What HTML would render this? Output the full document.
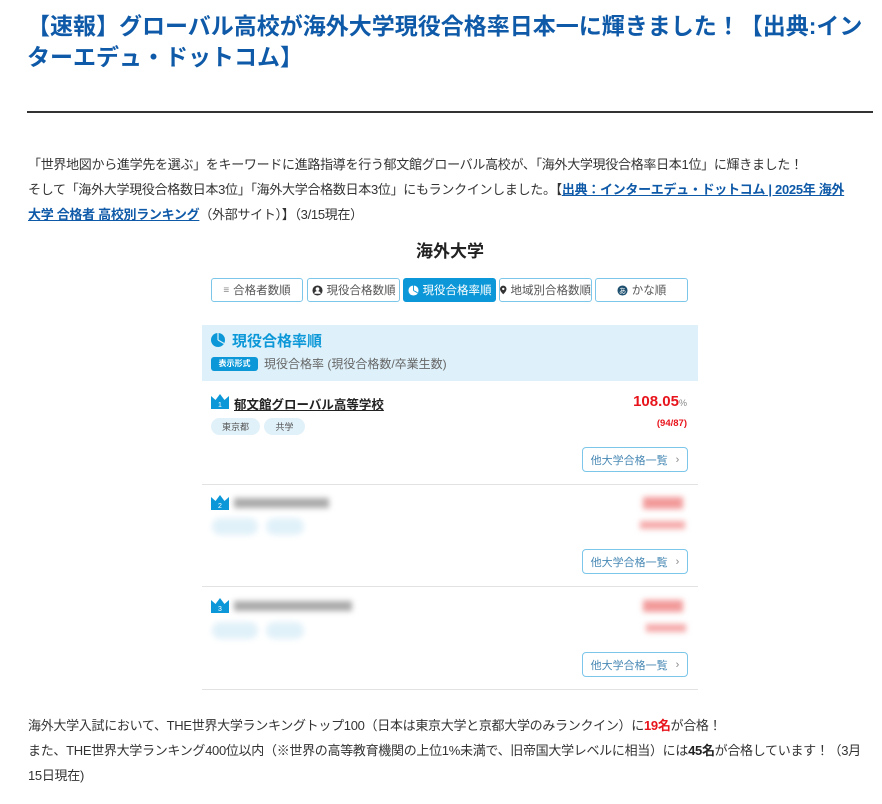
<!DOCTYPE html>
<html><head><meta charset="utf-8"><style>
*{margin:0;padding:0;box-sizing:border-box}
body{width:882px;height:804px;background:#fff;font-family:"Liberation Sans","Noto Sans CJK JP",sans-serif;color:#333;position:relative;overflow:hidden}
.abs{position:absolute}
h1{position:absolute;left:27px;top:11px;width:850px;font-size:23px;line-height:31px;color:#0f5aa8;font-weight:bold}
.hr{left:27px;top:111px;width:846px;height:2px;background:#333}
.p{left:28px;font-size:13px;line-height:25px;color:#333;white-space:nowrap;letter-spacing:-0.3px}
.p a{color:#0f5aa8;font-weight:bold;text-decoration:underline}
.tab{position:absolute;top:278px;height:24px;border:1.5px solid #7cc6ea;border-radius:3px;font-size:11.5px;color:#555;display:flex;align-items:center;justify-content:center;gap:4px;background:#fff;white-space:nowrap}
.tab.on{background:#0c98d8;border-color:#0c98d8;color:#fff}
.btn{position:absolute;left:582px;width:106px;height:25px;border:1.5px solid #7cc6ea;border-radius:4px;font-size:11px;color:#4a8ab5;display:flex;align-items:center;justify-content:center;gap:8px}
.tag{position:absolute;height:17px;border-radius:9px;background:#e1f1f9;font-size:9px;color:#555;display:flex;align-items:center;justify-content:center}
.crown{position:absolute;width:18px;height:15px}
.blur{filter:blur(3px)}
.div{position:absolute;left:202px;width:496px;height:1px;background:#e2e2e2}
</style></head><body>
<h1>【速報】グローバル高校が海外大学現役合格率日本一に輝きました！【出典:インターエデュ・ドットコム】</h1>
<div class="abs hr"></div>
<div class="abs p" style="top:152px">「世界地図から進学先を選ぶ」をキーワードに進路指導を行う郁文館グローバル高校が、「海外大学現役合格率日本1位」に輝きました！</div>
<div class="abs p" style="top:177px">そして「海外大学現役合格数日本3位」「海外大学合格数日本3位」にもランクインしました。【<a>出典：インターエデュ・ドットコム | 2025年 海外</a></div>
<div class="abs p" style="top:202px"><a>大学 合格者 高校別ランキング</a>（外部サイト）】（3/15現在）</div>

<div class="abs" style="left:202px;top:237px;width:496px;text-align:center;font-size:17px;font-weight:bold;color:#222">海外大学</div>
<div class="tab" style="left:211px;width:92px"><span style="font-size:10px;color:#888">≡</span>合格者数順</div>
<div class="tab" style="left:307px;width:93px"><svg width="11" height="11" viewBox="0 0 12 12"><circle cx="6" cy="6" r="5.5" fill="#333"/><circle cx="6" cy="4.5" r="2" fill="#fff"/><path d="M2.5 9.5a3.5 3 0 0 1 7 0" fill="#fff"/></svg>現役合格数順</div>
<div class="tab on" style="left:403px;width:93px"><svg width="11" height="11" viewBox="0 0 12 12"><circle cx="6" cy="6" r="5.5" fill="#fff"/><path d="M6 6V0.5M6 6l4.5 2.5" stroke="#0c98d8" stroke-width="1"/></svg>現役合格率順</div>
<div class="tab" style="left:499px;width:93px"><svg width="9" height="12" viewBox="0 0 9 12"><path d="M4.5 0a4.5 4.5 0 0 1 4.5 4.5C9 8 4.5 12 4.5 12S0 8 0 4.5A4.5 4.5 0 0 1 4.5 0z" fill="#333"/><circle cx="4.5" cy="4.5" r="1.7" fill="#fff"/></svg>地域別合格数順</div>
<div class="tab" style="left:595px;width:93px"><svg width="11" height="11" viewBox="0 0 12 12"><circle cx="6" cy="6" r="5.5" fill="#1d4f6e"/><text x="6" y="9" font-size="8" fill="#fff" text-anchor="middle" font-family="Noto Sans CJK JP">あ</text></svg>かな順</div>

<div class="abs" style="left:202px;top:325px;width:496px;height:56px;background:#def1fa"></div>
<svg class="abs" style="left:211px;top:333px" width="14" height="14" viewBox="0 0 14 14"><circle cx="7" cy="7" r="7" fill="#0c98d8"/><path d="M7 7V0M7 7l6 3.5" stroke="#def1fa" stroke-width="1.2"/></svg>
<div class="abs" style="left:232px;top:330px;font-size:15px;font-weight:bold;color:#0c98d8">現役合格率順</div>
<div class="abs" style="left:211px;top:357px;width:47px;height:14px;background:#0c98d8;border-radius:3px;color:#fff;font-size:8px;font-weight:bold;text-align:center;line-height:14px">表示形式</div>
<div class="abs" style="left:264px;top:355px;font-size:12px;color:#666">現役合格率 (現役合格数/卒業生数)</div>

<svg class="crown" style="left:211px;top:394px" viewBox="0 0 18 15"><path d="M0 2l4.5 4L9 0l4.5 6L18 2v13H0z" fill="#0c98d8"/><text x="9" y="13" font-size="7" fill="#fff" text-anchor="middle">1</text></svg>
<div class="abs" style="left:234px;top:394px;font-size:12.5px;font-weight:bold;color:#222;text-decoration:underline">郁文館グローバル高等学校</div>
<div class="abs" style="left:610px;top:393px;width:77px;text-align:right;font-size:15px;font-weight:bold;color:#e8141c">108.05<span style="font-size:9px;color:#888;font-weight:normal">%</span></div>
<div class="abs" style="left:610px;top:418px;width:77px;text-align:right;font-size:9.5px;font-weight:bold;color:#e8141c">(94/87)</div>
<div class="tag" style="left:211px;top:418px;width:49px">東京都</div>
<div class="tag" style="left:264px;top:418px;width:41px">共学</div>
<div class="btn" style="top:447px">他大学合格一覧<span style="color:#888">›</span></div>
<div class="div" style="top:484px"></div>

<svg class="crown" style="left:211px;top:495px" viewBox="0 0 18 15"><path d="M0 2l4.5 4L9 0l4.5 6L18 2v13H0z" fill="#0c98d8"/><text x="9" y="13" font-size="7" fill="#fff" text-anchor="middle">2</text></svg>
<div class="abs blur" style="left:234px;top:498px;width:95px;height:10px;background:#aaa"></div>
<div class="abs blur" style="left:643px;top:497px;width:40px;height:12px;background:#f29a9a"></div>
<div class="abs blur" style="left:640px;top:521px;width:45px;height:8px;background:#f5a8a8"></div>
<div class="tag blur" style="left:212px;top:518px;width:46px"></div>
<div class="tag blur" style="left:266px;top:518px;width:38px"></div>
<div class="btn" style="top:549px">他大学合格一覧<span style="color:#888">›</span></div>
<div class="div" style="top:586px"></div>

<svg class="crown" style="left:211px;top:598px" viewBox="0 0 18 15"><path d="M0 2l4.5 4L9 0l4.5 6L18 2v13H0z" fill="#0c98d8"/><text x="9" y="13" font-size="7" fill="#fff" text-anchor="middle">3</text></svg>
<div class="abs blur" style="left:234px;top:601px;width:118px;height:10px;background:#aaa"></div>
<div class="abs blur" style="left:643px;top:600px;width:40px;height:12px;background:#f29a9a"></div>
<div class="abs blur" style="left:646px;top:624px;width:40px;height:8px;background:#f5a8a8"></div>
<div class="tag blur" style="left:212px;top:622px;width:46px"></div>
<div class="tag blur" style="left:266px;top:622px;width:38px"></div>
<div class="btn" style="top:652px">他大学合格一覧<span style="color:#888">›</span></div>
<div class="div" style="top:689px"></div>

<div class="abs p" style="top:713px">海外大学入試において、THE世界大学ランキングトップ100（日本は東京大学と京都大学のみランクイン）に<b style="color:#e8141c">19名</b>が合格！</div>
<div class="abs p" style="top:738px">また、THE世界大学ランキング400位以内（※世界の高等教育機関の上位1%未満で、旧帝国大学レベルに相当）には<b style="color:#222">45名</b>が合格しています！（3月</div>
<div class="abs p" style="top:763px">15日現在)</div>
</body></html>
